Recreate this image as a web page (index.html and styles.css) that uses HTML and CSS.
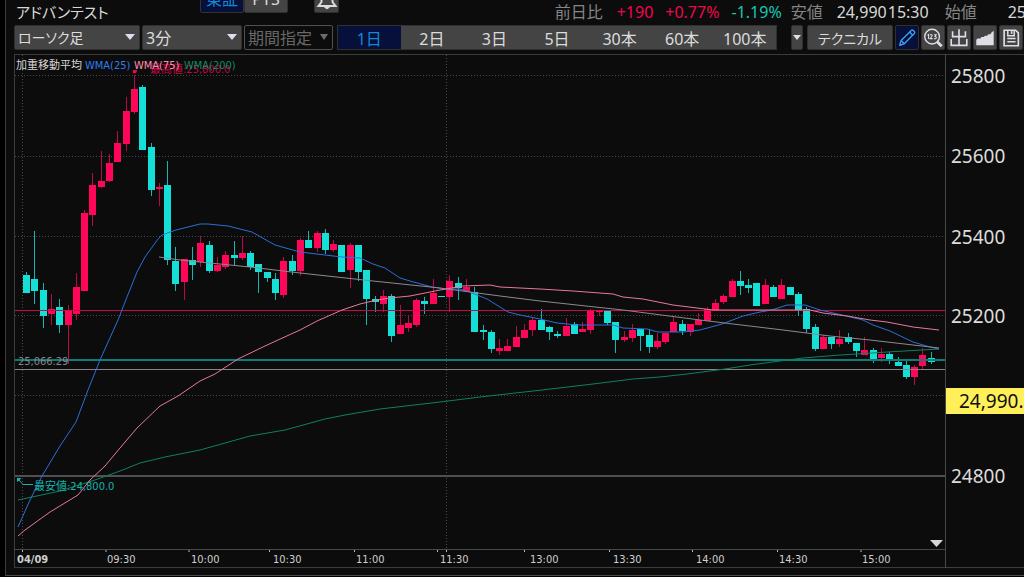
FILE: index.html
```html
<!DOCTYPE html>
<html lang="ja">
<head>
<meta charset="utf-8">
<title>アドバンテスト</title>
<link rel="stylesheet" href="styles.css">
</head>
<body>
<main class="panel">
  <header class="head">
    <h1 class="name">アドバンテスト</h1>
    <div class="markets">
      <button class="market active" type="button">東証</button><button class="market" type="button">PTS</button>
    </div>
    <button class="bell" type="button" aria-label="アラート">
      <svg width="24" height="26" viewBox="0 0 24 26" fill="none" stroke="#dcdcdc" stroke-width="2"><path d="M3.500 20h17l-3-4V10a5.500 5.500 0 0 0-11 0v6z"/><path d="M9.500 21q2.500 3.500 5 0" fill="#dcdcdc" stroke-width="1"/></svg>
    </button>
    <div class="quote">
      <span class="label">前日比</span>
      <span class="up">+190</span>
      <span class="up">+0.77%</span>
      <span class="down">-1.19%</span>
      <span class="label low">安値</span>
      <span class="value">24,990</span>
      <span class="time">15:30</span>
      <span class="label open">始値</span>
      <span class="first">25</span>
    </div>
  </header>

  <div class="tools">
    <label class="pick kind"><select aria-label="チャート種類"><option>ローソク足</option></select></label>
    <label class="pick span"><select aria-label="足種"><option>3分</option></select></label>
    <label class="pick range"><select aria-label="期間指定" disabled><option>期間指定</option></select></label>
    <div class="periods">
      <button class="period active" type="button">1日</button>
      <button class="period" type="button">2日</button>
      <button class="period" type="button">3日</button>
      <button class="period" type="button">5日</button>
      <button class="period" type="button">30本</button>
      <button class="period" type="button">60本</button>
      <button class="period" type="button">100本</button>
    </div>
    <button class="more" type="button" aria-label="その他の期間"></button>
    <button class="technical" type="button">テクニカル</button>
    <div class="icons">
      <button class="icon active" type="button" aria-label="描画">
        <svg viewBox="0 0 24 24" fill="none" stroke="#3aa0f0" stroke-width="1.500" stroke-linejoin="round"><path d="M4 20l1.600-5.200L16.600 3.700q1-.9 2.100 0l1.300 1.300q.9 1 0 2L9 18.300z"/><path d="M5.600 14.800L9 18.300M14.800 5.500l3.500 3.500"/></svg>
      </button>
      <button class="icon" type="button" aria-label="数値表示">
        <svg viewBox="0 0 24 24" fill="none" stroke="#dedee6" stroke-width="1.500"><circle cx="11" cy="10.500" r="8"/><path d="M16.500 16l5 5" stroke-width="3"/><path d="M6 9l1.200-.8v5M9 9q1-1.500 2 0 .3 1-2 3.700h2.600M13 8.500h2.400l-1.200 1.800q1.600.2 1.300 1.600-.8 1.500-2.500.6" stroke-width="1.200"/></svg>
      </button>
      <button class="icon" type="button" aria-label="出来高">
        <svg viewBox="0 0 24 24" fill="none" stroke="#dedee6" stroke-width="1.800"><path d="M12 2.500V20M5 4.500v6h14v-6M3.500 13v7h17v-7"/></svg>
      </button>
      <button class="icon" type="button" aria-label="エリア表示">
        <svg viewBox="0 0 24 24" fill="#dedee6"><path d="M2.500 20v-6l1.500-1.500h3L8 11h2.500L12 9.500h2.500l1-1.500H18l1-2 2.500-2V20z"/></svg>
      </button>
      <button class="icon" type="button" aria-label="保存">
        <svg viewBox="0 0 24 24" fill="none" stroke="#dedee6" stroke-width="1.800"><path d="M4.500 3.500H17l3 3v14H4.500z"/><path d="M8.500 4v5.500h7V4M8 12.500h9M8 16h9" stroke-width="1.600"/><path d="M12.700 4.500v3"/></svg>
      </button>
    </div>
  </div>

  <svg class="chart" id="chart" viewBox="14 54 1010 514" role="img" aria-label="3分足チャート">
    <path class="frame" d="M14 54.500h1010M14.500 54v514M14 567.500h1010"/>
    <path class="rule" d="M14 549.500h931M945.500 54v514"/>
    <path class="grid" d="M15 75.500h930M15 156.500h930M15 236.500h930M15 315.500h930M15 395.500h930M22.500 55v494M446.500 55v494"/>
    <path class="tick" d="M22.500 550v2M106 550v2M189 550v2M269.500 550v2M354.500 550v2M437.500 550v2M446.500 550v2M524.500 550v2M609.500 550v2M692.500 550v2M777.500 550v2M861 550v2"/>

    <text class="high" x="150" y="73">最高値:25,800.0</text>
    <path class="high-mark" d="M133 70h4v1l-1 2h-3z"/>
    <g id="candles"></g>

    <path class="level-red" d="M15 310.500h930"/>
    <path class="level-teal" d="M15 360h930"/>
    <path class="level-light" d="M15 369.500h930"/>
    <path class="level-dark" d="M15 476h930"/>

    <polyline class="line green" points="18,500 60,491 95,480 120,471 140,463 165,457 200,450 250,436 285,430 325,419 345,415 380,409 440,402 480,397 542,390 593,384 633,379 660,377 687,374 725,369 750,365 780,361 803,358 840,355 857,354 887,352 939,349"/>
    <polyline class="line blue" points="18,527 30,500 42,476 60,446 76,422 88,390 100,360 118,320 127,297 137,272 145,257 158,239 162,235 176,230 200,224 208,224 228,226 252,232 275,245 300,252 325,255 342,257 360,258 373,264 385,268 400,278 410,281 432,287 445,289 460,289 467,291 477,295 487,299 508,312 520,315 540,319 557,323 577,325 613,325 623,328 647,329 658,332 683,332 700,330 722,324 743,316 760,312 772,310 787,305 805,305 820,310 842,315 863,320 873,325 890,331 913,342 930,347 939,349"/>
    <polyline class="line pink" points="18,536 25,530 50,512 78,495 90,480 105,466 120,448 137,428 160,406 178,396 200,381 215,374 238,359 265,346 278,340 300,330 317,321 342,310 360,304 377,300 390,298 410,296 425,293 440,290 463,286 490,285 500,287 540,289 573,291 613,294 623,297 643,299 673,305 713,310 783,310 810,310 823,313 847,316 870,320 887,322 913,327 939,330"/>
    <polyline class="line gray" points="159,257 180,260 250,267 300,273 373,281 440,288 500,296 540,301 623,310 700,320 733,324 783,330 830,336 870,340 913,345 939,348"/>

    <g class="legend">
      <text x="16" y="69" fill="#d6d6d6">加重移動平均</text>
      <text x="85" y="69" fill="#2f7cf0">WMA(25)</text>
      <text x="134" y="69" fill="#ff8fae">WMA(75)</text>
      <text x="184" y="69" fill="#0c8a68">WMA(200)</text>
    </g>
    <text class="basis" x="18" y="365">25,066.29</text>
    <path class="low-head" d="M17 478h4l-1 2-3 2z"/>
    <path class="low-mark" d="M19 480l4 4.500h10"/>
    <text class="low-text" x="34" y="490">最安値:24,800.0</text>

    <g class="times">
      <text class="date" x="17" y="563">04/09</text>
      <text x="107" y="563">09:30</text>
      <text x="191" y="563">10:00</text>
      <text x="273" y="563">10:30</text>
      <text x="356" y="563">11:00</text>
      <text x="440" y="563">11:30</text>
      <text x="530" y="563">13:00</text>
      <text x="613" y="563">13:30</text>
      <text x="696" y="563">14:00</text>
      <text x="779" y="563">14:30</text>
      <text x="862" y="563">15:00</text>
    </g>
    <path fill="#d6d6d6" d="M930 540h13l-6.500 7z"/>

    <g class="prices">
      <text x="951" y="83">25800</text>
      <text x="951" y="163">25600</text>
      <text x="951" y="244">25400</text>
      <text x="951" y="323">25200</text>
      <text x="951" y="483">24800</text>
    </g>
    <path fill="#fff05a" d="M946 388h78v26h-78z"/>
    <text class="last" x="959" y="408">24,990.</text>
  </svg>
</main>
<script src="chart.js"></script>
</body>
</html>
```
FILE: styles.css
```css
* { box-sizing: border-box; }

body {
  margin: 0;
  background: #000;
  color: #d8d8d8;
  font-family: "Noto Sans", "Noto Sans CJK JP", sans-serif;
  font-size: 16px;
  overflow-x: hidden;
}

button, select {
  font: inherit;
  color: #dcdcdc;
  border: 1px solid #303030;
  border-radius: 2px;
  background: #444;
  padding: 0;
  margin: 0;
}

.panel {
  margin-left: 5px;
  padding: 0 0 7px 8px;
  border-left: 1px solid #3c3c3c;
  border-bottom: 1px solid #4a4a4a;
  background: #0c0c0c;
}

.head {
  display: flex;
  height: 25px;
  overflow: hidden;
  white-space: nowrap;
  line-height: 25px;
}

.name {
  width: 186px;
  padding-left: 2px;
  margin: 0;
  font-size: 15px;
  font-weight: 400;
  font-feature-settings: "palt";
}

.markets { display: flex; }

.market, .bell {
  height: 28px;
  margin-top: -15px;
  line-height: 24px;
}

.market { width: 44px; }
.market.active { background: #06103a; color: #0f8ad6; border-color: #333; }
.bell { width: 25px; margin-left: 26px; }
.bell svg { display: block; }

.quote { display: flex; margin: 0 -2px 0 auto; }
.label { color: #858585; margin-right: 14px; }
.up { color: #f0064e; margin-right: 12px; }
.down { color: #14c8b0; margin-right: 9px; }
.value { margin-right: 1px; }
.time { margin-right: 16px; }
.open { margin-right: 31px; }

.tools {
  display: flex;
  height: 29px;
  padding: 0 1px 4px 0;
}

.pick { position: relative; display: flex; margin-right: 2px; }
.pick::after {
  content: "";
  position: absolute;
  right: 5px;
  top: 9px;
  border: 5px solid transparent;
  border-top: 6px solid #e0dcec;
  border-bottom: 0;
  pointer-events: none;
}
.pick select {
  appearance: none;
  width: 100%;
  padding-left: 3px;
  font-feature-settings: "palt";
}
.kind { width: 126px; }
.kind select { font-size: 14px; }
.span { width: 100px; }
.range { width: 89px; margin-right: 4px; }
.range select { background: #0c0c0c; border-color: #505050; color: #686868; opacity: 1; font-feature-settings: normal; }
.range::after { border-top-color: #6c6c6c; border-left-width: 4px; border-right-width: 4px; }

.periods { display: flex; flex: 1; border: 1px solid #303030; background: #444; }
.period { flex: 1; border: 0; border-radius: 0; }
.period.active { background: #06103a; color: #0f8ad6; }

.more { width: 12px; margin-left: 14px; display: grid; place-items: center; }
.more::after { content: ""; border: 4px solid transparent; border-top: 5px solid #e0e0e0; border-bottom: 0; }
.technical { width: 86px; margin: 0 2px 0 4px; font-size: 14px; font-feature-settings: "palt"; }

.icons { display: flex; gap: 2px; }
.icon { width: 24px; }
.icon.active { background: #06103a; }
.icon svg { display: block; width: 100%; }

.chart { display: block; width: 100%; }
.frame { fill: none; stroke: #3c3c3c; }
.rule { fill: none; stroke: #484848; }
.grid { fill: none; stroke: #484848; stroke-dasharray: 1 2; }
.tick { stroke: #b8b8b8; }
.up-body { fill: #ff0658; }
.down-body { fill: #14e0d8; }
.up-wick { fill: #c0064a; }
.down-wick { fill: #12b8b0; }
.level-red { stroke: #c80a48; }
.level-teal { stroke: #0c7c76; stroke-width: 2; }
.level-light { stroke: #88828e; }
.level-dark { stroke: #505054; stroke-width: 2; }
.line { fill: none; stroke-width: 1; }
.green { stroke: #0c8060; }
.blue { stroke: #2a6fd8; }
.pink { stroke: #e87898; }
.gray { stroke: #8c8890; }

.chart text { font-family: "DejaVu Sans Condensed", "Noto Sans CJK JP", sans-serif; font-size: 11px; }
.chart .high { fill: #c00644; }
.high-mark { fill: #f00650; }
.basis { fill: #8a8890; }
.low-text, .low-head { fill: #12b4ac; }
.low-mark { fill: none; stroke: #12b4ac; }
.times text { fill: #cfcfcf; }
.times .date { font-weight: 700; }
.chart .prices text, .chart .last { font-family: "Noto Sans", sans-serif; font-size: 19px; }
.prices text { fill: #dcdcdc; }
.last { fill: #101010; }
```
FILE: chart.js
```js
// One row per bar: direction, body top, body bottom, wick top, wick bottom.
const bars = `
d 275 293 272 293|d 279 291 231 304|d 290 316 283 328|u 309 314 294 325|d 307 325 299 333|u 310 325 305 364|u 287 314 273 320|u 213 291 210 291
u 185 215 173 226|u 181 187 151 188|u 163 181 154 182|u 143 162 131 162|u 111 144 97 151|u 89 112 75 114|d 87 150 85 150|d 147 190 143 196
u 187 189 183 206|d 185 260 161 265|d 261 284 247 291|u 259 282 259 300|d 260 265 247 280|u 243 262 236 267|d 245 271 241 273|u 265 271 257 272
u 255 267 251 269|d 255 258 241 265|u 253 258 236 260|d 253 267 251 270|d 264 272 264 293|d 272 278 272 282|d 279 293 273 300|u 261 295 257 298
d 261 271 255 275|u 240 271 238 276|d 240 248 231 248|u 233 248 231 252|d 233 250 229 254|u 244 250 240 252|d 245 272 245 272|u 245 270 243 288
d 245 272 245 281|d 270 299 270 325|d 299 302 296 312|u 296 304 290 312|d 296 336 294 342|u 325 334 305 334|u 323 328 315 332|u 300 325 298 327
d 301 304 297 314|u 293 304 279 304|d 296 297 296 297|u 281 297 275 312|d 283 288 277 300|u 287 291 279 292|d 292 332 287 332|d 330 332 325 340
d 332 349 330 353|u 348 351 339 355|u 346 351 339 351|u 337 347 326 347|u 330 338 324 338|u 320 330 318 336|d 320 330 309 330|d 327 332 326 340
d 334 336 331 338|u 326 336 318 336|d 324 334 322 334|u 329 332 322 332|u 310 330 309 334|u 310 312 310 316|d 310 323 310 325|d 322 340 322 353
u 337 340 331 342|u 330 338 324 342|d 329 336 329 351|d 335 347 329 353|u 341 347 333 349|u 333 342 333 344|u 322 332 316 332|d 324 331 320 335
u 324 332 324 336|u 320 325 313 325|u 309 321 307 321|u 303 310 299 310|u 296 302 294 304|u 281 297 279 297|d 281 286 271 295|d 285 288 279 293
d 283 306 283 306|u 285 304 279 304|d 287 297 285 297|u 285 299 279 299|d 287 295 287 295|d 294 310 292 316|d 309 329 307 333|d 327 349 324 351
u 337 349 335 349|d 337 344 337 349|u 339 344 330 347|d 337 342 333 344|d 343 351 343 357|u 350 355 337 355|d 350 360 348 363|u 354 358 348 362
d 354 360 352 364|d 362 366 357 366|d 365 377 361 379|u 367 377 365 385|u 355 366 348 369|d 358 362 352 364`.trim().split(/[|\n]/);

const NS = "http://www.w3.org/2000/svg";
const group = document.getElementById("candles");
const FIRST = 26.5;
const PITCH = 8.3;

function rect(x, y, w, h, cls) {
  const r = document.createElementNS(NS, "rect");
  r.setAttribute("x", x);
  r.setAttribute("y", y);
  r.setAttribute("width", w);
  r.setAttribute("height", h);
  r.setAttribute("class", cls);
  group.append(r);
}

bars.forEach((row, i) => {
  const [dir, ...n] = row.split(" ");
  const [top, bottom, high, low] = n.map(Number);
  const side = dir === "u" ? "up" : "down";
  const x = Math.round(FIRST + PITCH * i - 0.5);
  rect(x, high, 1, low - high, side + "-wick");
  rect(x - 3, top, 7, bottom - top, side + "-body");
});
```
